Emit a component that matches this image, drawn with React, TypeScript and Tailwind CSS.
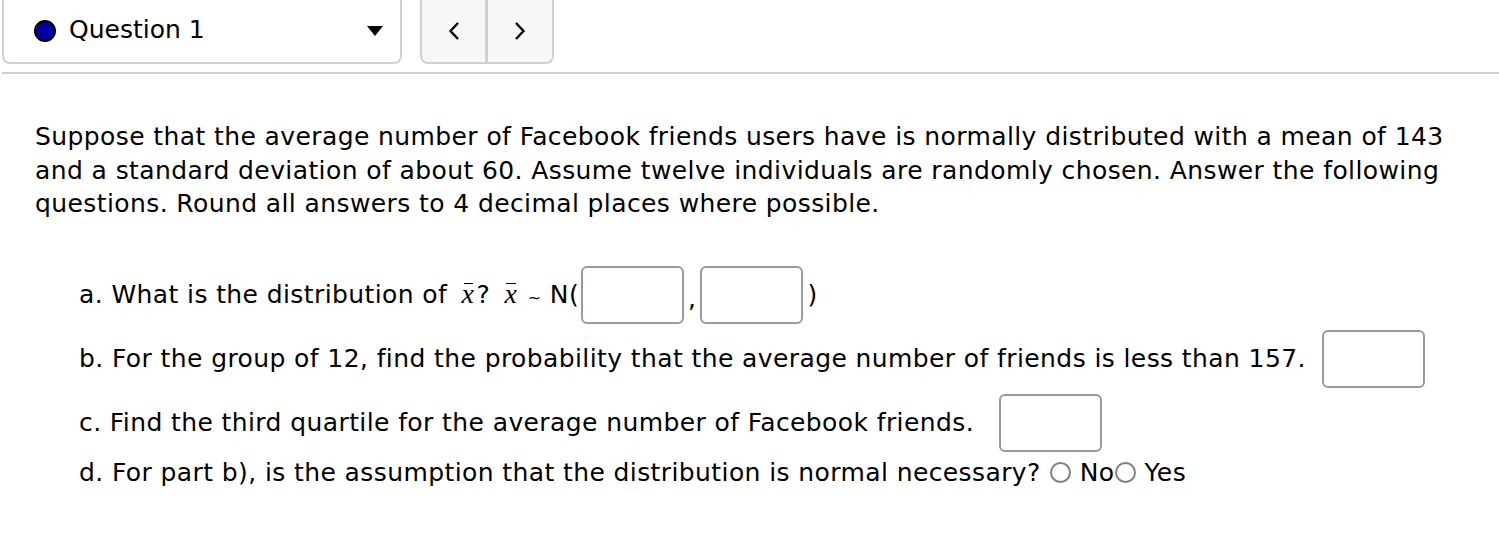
import React, { useState } from "react";

function XBar() {
  return (
    <span className="relative inline-block font-['Liberation_Serif',serif] italic text-[28px] leading-none pl-[6px] pr-[2px]">
      x
      <span className="absolute left-[8px] right-[3px] top-[3px] h-[1.5px] bg-black" />
    </span>
  );
}

function AnswerBox({ className = "" }: { className?: string }) {
  return (
    <input
      type="text"
      className={`w-[103px] h-[58px] border-2 border-[#9a9a9a] rounded-[6px] bg-white outline-none ${className}`}
    />
  );
}

function Radio({ checked, onClick }: { checked: boolean; onClick: () => void }) {
  return (
    <span
      onClick={onClick}
      className="inline-block w-[21px] h-[21px] rounded-full border-2 border-[#808080] bg-white align-middle cursor-pointer"
    >
      {checked && <span className="block w-[11px] h-[11px] m-[3px] rounded-full bg-[#333]" />}
    </span>
  );
}

export default function App() {
  const [choice, setChoice] = useState("");
  return (
    <div className="w-[1499px] h-[544px] bg-white text-black font-['DejaVu_Sans',sans-serif] text-[25px] tracking-[0.4px] overflow-hidden">
      <div className="flex gap-[18px] pl-[2px]">
        <div className="w-[400px] h-[64px] border-2 border-t-0 border-[#d0d0d0] rounded-b-[8px] flex items-center pl-[30px] pr-[17px]">
          <span className="w-[22px] h-[22px] rounded-full bg-[#0000a0] border-[2.5px] border-black" />
          <span className="ml-[13px] pb-[2px] tracking-normal">Question 1</span>
          <span className="ml-auto w-0 h-0 border-l-[8px] border-r-[8px] border-t-[10px] border-l-transparent border-r-transparent border-t-black" />
        </div>
        <div className="w-[134px] h-[64px] border-2 border-t-0 border-[#d0d0d0] rounded-b-[8px] bg-[#f7f7f7] flex">
          <button className="w-[66px] h-full flex items-center justify-center border-r-[3px] border-[#d0d0d0]">
            <svg width="12" height="20" viewBox="0 0 12 20" fill="none" stroke="black" strokeWidth="2.4">
              <path d="M10 2 L2.5 10 L10 18" />
            </svg>
          </button>
          <button className="flex-1 h-full flex items-center justify-center">
            <svg width="12" height="20" viewBox="0 0 12 20" fill="none" stroke="black" strokeWidth="2.4">
              <path d="M2 2 L9.5 10 L2 18" />
            </svg>
          </button>
        </div>
      </div>
      <div className="mt-[8px] ml-[2px] h-[2px] bg-[#d0d0d0]" />

      <p className="mt-[46px] pl-[35px] pr-[50px] leading-[33.5px]">
        Suppose that the average number of Facebook friends users have is normally distributed with a
        mean of 143 and a standard deviation of about 60. Assume twelve individuals are randomly
        chosen. Answer the following questions. Round all answers to 4 decimal places where possible.
      </p>

      <div className="mt-[45px] pl-[79px] flex flex-col">
        <div className="flex items-center h-[58px]">
          <span>
            a. What is the distribution of <XBar />? <XBar /> <span className="text-[16px]">~</span> N(
          </span>
          <AnswerBox className="ml-[2px]" />
          <span className="mx-[4px] self-end pb-[6px]">,</span>
          <AnswerBox />
          <span className="ml-[4px]">)</span>
        </div>
        <div className="flex items-center h-[58px] mt-[6px]">
          <span>
            b. For the group of 12, find the probability that the average number of friends is less
            than 157.
          </span>
          <AnswerBox className="ml-[16px]" />
        </div>
        <div className="flex items-center h-[58px] mt-[6px]">
          <span>c. Find the third quartile for the average number of Facebook friends.</span>
          <AnswerBox className="ml-[25px]" />
        </div>
        <div className="flex items-center h-[34px] mt-[4px]">
          <span>d. For part b), is the assumption that the distribution is normal necessary?</span>
          <span className="ml-[9px] flex items-center">
            <Radio checked={choice === "no"} onClick={() => setChoice("no")} />
          </span>
          <span className="ml-[9px]">No</span>
          <span className="flex items-center">
            <Radio checked={choice === "yes"} onClick={() => setChoice("yes")} />
          </span>
          <span className="ml-[9px]">Yes</span>
        </div>
      </div>
    </div>
  );
}
